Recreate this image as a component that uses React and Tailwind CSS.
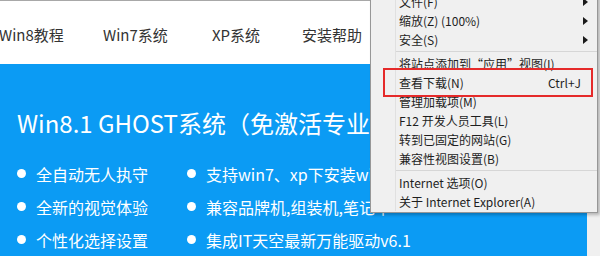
import React from 'react'

const navItems = [
  { label: 'Win8教程', w: 'w-[104px]' },
  { label: 'Win7系统', w: 'w-[109px]' },
  { label: 'XP系统', w: 'w-[90px]' },
  { label: '安装帮助', w: 'w-[90px]' },
]

const features = [
  ['全自动无人执守', '支持win7、xp下安装win8.1'],
  ['全新的视觉体验', '兼容品牌机,组装机,笔记本'],
  ['个性化选择设置', '集成IT天空最新万能驱动v6.1'],
]

const menu = [
  [
    { label: '文件(F)', sub: true },
    { label: '缩放(Z) (100%)', sub: true },
    { label: '安全(S)', sub: true },
  ],
  [
    { label: '将站点添加到“应用”视图(I)' },
    { label: '查看下载(N)', shortcut: 'Ctrl+J' },
    { label: '管理加载项(M)' },
    { label: 'F12 开发人员工具(L)' },
    { label: '转到已固定的网站(G)' },
    { label: '兼容性视图设置(B)' },
  ],
  [
    { label: 'Internet 选项(O)' },
    { label: '关于 Internet Explorer(A)' },
  ],
]

function MenuItem({ item }) {
  return (
    <div className="h-[19px] flex items-center pl-[3px] text-[12px] text-[#1e1e1e] leading-none">
      <span className="flex-1 whitespace-nowrap">{item.label}</span>
      {item.shortcut && <span className="pr-[16px]">{item.shortcut}</span>}
      {item.sub && (
        <span className="pr-[9px]">
          <svg width="5" height="8" viewBox="0 0 5 8">
            <path d="M0 0 L5 4 L0 8 Z" fill="#1a1a1a" />
          </svg>
        </span>
      )}
    </div>
  )
}

export default function App() {
  return (
    <div
      className="relative w-[600px] h-[256px] overflow-hidden bg-white flex"
      style={{ fontFamily: '"Noto Sans CJK SC", "Noto Sans", sans-serif' }}
    >
      {/* page */}
      <div className="w-[587px] flex flex-col">
        <div className="h-[70px] border-t border-[#a8a8a8] bg-white flex items-center -ml-[1px] pt-[5px]">
          {navItems.map(n => (
            <span key={n.label} className={`${n.w} shrink-0 text-[15px] text-[#333] whitespace-nowrap`}>
              {n.label}
            </span>
          ))}
        </div>
        <div className="flex-1 bg-[#0b9bf4] pl-[17px] pt-[43px] text-white">
          <h1 className="text-[24px] leading-[32px] whitespace-nowrap font-normal">
            Win8.1 GHOST系统（免激活专业版）
          </h1>
          <div className="mt-[18px] grid grid-cols-[170px_1fr]">
            {features.map(row =>
              row.map(t => (
                <div key={t} className="h-[33px] flex items-center gap-[10px] whitespace-nowrap">
                  <span className="w-[9px] h-[9px] rounded-full bg-white shrink-0" />
                  <span className="text-[16px]">{t}</span>
                </div>
              ))
            )}
          </div>
        </div>
      </div>
      <div className="w-[13px] bg-[#f0f0f0]" />

      {/* context menu */}
      <div className="absolute left-[370px] top-[-9px] w-[228px] bg-[#f0f0f0] border border-[#979797] shadow-[2px_2px_3px_rgba(0,0,0,0.25)] flex pb-[1px]">
        <div className="w-[25px] border-r border-[#e0e0e0]" />
        <div className="flex-1">
          {menu.map((group, gi) => (
            <div key={gi}>
              {gi > 0 && (
                <div className="h-[5px] flex items-center">
                  <div className="w-full h-px bg-[#d6d6d6]" />
                </div>
              )}
              {group.map(item => (
                <MenuItem key={item.label} item={item} />
              ))}
            </div>
          ))}
        </div>
      </div>

      {/* highlight annotation */}
      <div className="absolute left-[383px] top-[68px] w-[210px] h-[29px] border-2 border-[#e52a2a]" />
    </div>
  )
}
